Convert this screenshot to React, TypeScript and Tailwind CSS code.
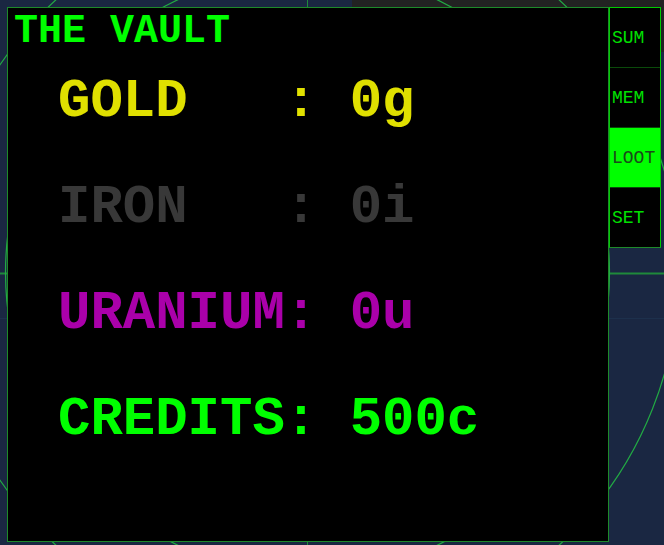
import { FC } from "react";

const rows = [
  { text: "GOLD   : 0g", color: "text-[#e0e000]" },
  { text: "IRON   : 0i", color: "text-[#383838]" },
  { text: "URANIUM: 0u", color: "text-[#aa00aa]" },
  { text: "CREDITS: 500c", color: "text-[#00ff00]" },
];

const tabs = ["SUM", "MEM", "LOOT", "SET"];

const Radar: FC = () => (
  <svg
    className="absolute inset-0"
    width={664}
    height={545}
    viewBox="0 0 664 545"
  >
    <rect x={352} y={0} width={312} height={52} fill="#222222" />
    <line x1={0} y1={273.5} x2={664} y2={273.5} stroke="#1f8a3a" strokeWidth={2} />
    <line x1={0} y1={318.5} x2={664} y2={318.5} stroke="#1d304c" strokeWidth={1} />
    <line x1={307.5} y1={0} x2={307.5} y2={545} stroke="#1f8a3a" strokeWidth={1} />
    <circle cx={307.5} cy={272.5} r={371} fill="none" stroke="#22aa44" strokeWidth={1.2} />
    <circle cx={307.5} cy={272.5} r={302} fill="none" stroke="#22aa44" strokeWidth={1.2} />
  </svg>
);

const App: FC = () => {
  return (
    <div className="relative h-[545px] w-[664px] overflow-hidden bg-[#1a2742] font-['Liberation_Mono',monospace]">
      <Radar />
      <div className="relative flex items-start pl-[7px] pt-[7px]">
        <main className="h-[535px] w-[602px] border border-[#1e8a2a] bg-black pl-[6px] pt-[4px]">
          <h1 className="whitespace-pre text-[40px] font-bold leading-[40px] text-[#00ff00]">
            THE VAULT
          </h1>
          <div className="mt-[23px] flex flex-col gap-[52px] pl-[44px]">
            {rows.map((r) => (
              <p
                key={r.text}
                className={`whitespace-pre text-[54px] font-bold leading-[54px] ${r.color}`}
              >
                {r.text}
              </p>
            ))}
          </div>
        </main>
        <nav className="w-[52px] border-x border-b border-x-[#00cc00] border-b-[#1e8a2a] bg-black">
          {tabs.map((t, i) => (
            <div
              key={t}
              className={`flex h-[60px] items-center border-t pl-[2px] text-[18px] leading-none ${
                i === 0 ? "border-[#00cc00]" : "border-[#0a4a0a]"
              } ${t === "LOOT" ? "bg-[#00ff00] text-[#1a4a1a]" : "text-[#00e000]"}`}
            >
              {t}
            </div>
          ))}
        </nav>
      </div>
    </div>
  );
};

export default App;
